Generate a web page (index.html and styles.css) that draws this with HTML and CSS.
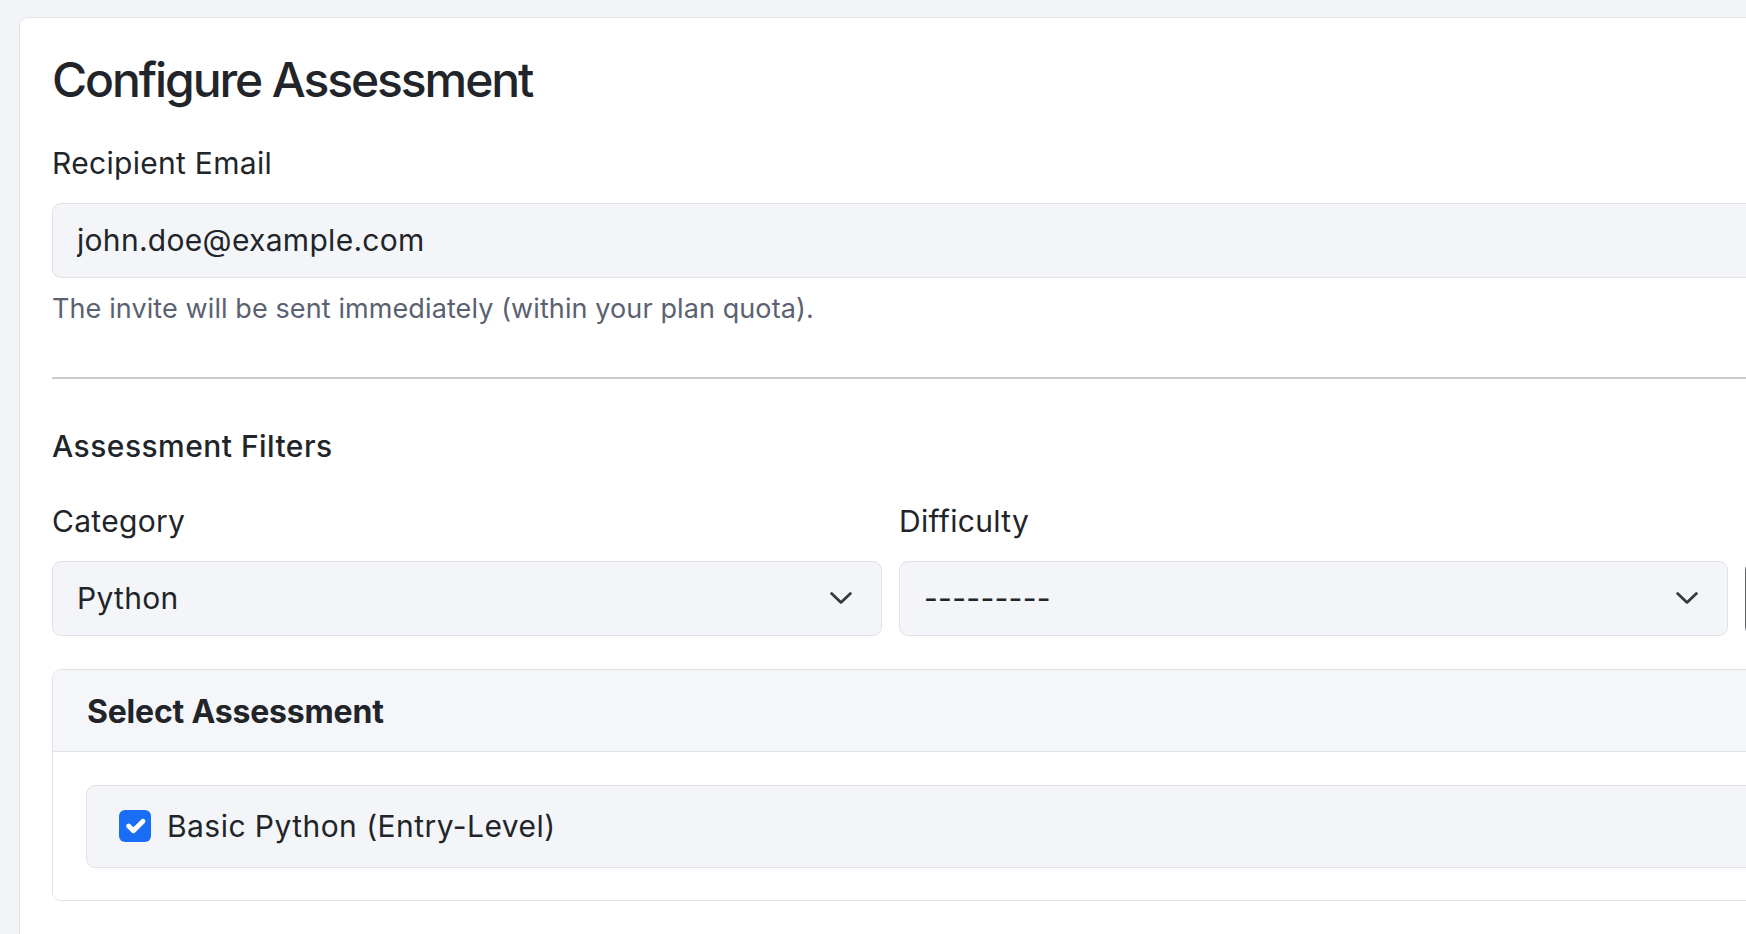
FILE: index.html
```html
<!DOCTYPE html>
<html lang="en">
<head>
<meta charset="utf-8">
<title>Configure Assessment</title>
<link rel="stylesheet" href="styles.css">
</head>
<body>
<div class="page">
  <main class="card">
    <h1 class="title">Configure Assessment</h1>
    <div class="field">
      <label class="label" for="email">Recipient Email</label>
      <input id="email" class="input" type="email" value="john.doe@example.com">
      <div class="help">The invite will be sent immediately (within your plan quota).</div>
    </div>
    <hr class="divider">
    <h2 class="section-title">Assessment Filters</h2>
    <div class="filters">
      <div class="filter">
        <div class="label">Category</div>
        <div class="select">
          <span>Python</span>
          <svg class="chevron" width="22" height="12" viewBox="0 0 22 12" aria-hidden="true"><path d="M1.6 1.6 L11 10.4 L20.4 1.6" fill="none" stroke="#343a40" stroke-width="2.8" stroke-linecap="round" stroke-linejoin="round"/></svg>
        </div>
      </div>
      <div class="filter">
        <div class="label">Difficulty</div>
        <div class="select">
          <span>---------</span>
          <svg class="chevron" width="22" height="12" viewBox="0 0 22 12" aria-hidden="true"><path d="M1.6 1.6 L11 10.4 L20.4 1.6" fill="none" stroke="#343a40" stroke-width="2.8" stroke-linecap="round" stroke-linejoin="round"/></svg>
        </div>
      </div>
      <div class="filter filter-action">
        <button class="btn" type="button" aria-label="Apply filters"></button>
      </div>
    </div>
    <section class="panel">
      <div class="panel-header">Select Assessment</div>
      <div class="panel-body">
        <label class="option">
          <span class="checkbox"><svg width="32" height="32" viewBox="0 0 20 20" aria-hidden="true"><path d="M6 10 L9 13 L15 7" fill="none" stroke="#fff" stroke-width="3" stroke-linecap="round" stroke-linejoin="round"/></svg></span>
          <span class="option-text">Basic Python (Entry-Level)</span>
        </label>
      </div>
    </section>
  </main>
</div>
</body>
</html>
```

FILE: styles.css
```css
html, body {
  margin: 0;
  padding: 0;
  overflow: hidden;
}

body {
  background: #f3f4f8;
  color: #212529;
  font-family: Inter, "Noto Sans", "Liberation Sans", sans-serif;
  letter-spacing: 0.3px;
}

.page {
  padding: 17px 0 0 19px;
}

.card {
  display: block;
  width: 2700px;
  background: #ffffff;
  border: 1px solid #e2e3e7;
  border-radius: 9px;
  padding: 33px 32px 90px 32px;
}

.title {
  margin: 0 0 32px 0;
  font-size: 48px;
  line-height: 1.2;
  font-weight: 500;
  letter-spacing: -2.1px;
}

.field {
  display: flex;
  flex-direction: column;
}

.label {
  display: block;
  font-size: 30px;
  line-height: 45px;
  font-weight: 400;
  margin-bottom: 17px;
}

.input {
  box-sizing: border-box;
  height: 75px;
  width: 100%;
  margin: 0;
  padding: 0 24px;
  border: 1px solid #dfe1e6;
  border-radius: 9px;
  background: #f4f5f9;
  color: #212529;
  font-family: inherit;
  font-size: 30px;
  letter-spacing: 0.3px;
  outline: none;
}

.help {
  margin-top: 11px;
  font-size: 27px;
  line-height: 40px;
  letter-spacing: 0.1px;
  color: #5a6271;
}

.divider {
  margin: 48px 0 0 0;
  border: 0;
  border-top: 2px solid #cacbcd;
}

.section-title {
  margin: 49px 0 35px 0;
  font-size: 30px;
  line-height: 36px;
  font-weight: 500;
  letter-spacing: 0.45px;
}

.filters {
  display: grid;
  grid-template-columns: 830px 829px 300px;
  column-gap: 17px;
}

.filter-action {
  display: flex;
  align-items: flex-end;
}

.select {
  box-sizing: border-box;
  height: 75px;
  display: flex;
  align-items: center;
  justify-content: space-between;
  padding: 0 29px 0 24px;
  border: 1px solid #dfe1e6;
  border-radius: 9px;
  background: #f4f5f9;
  font-size: 30px;
}

.btn {
  box-sizing: border-box;
  height: 75px;
  width: 100%;
  border: 1px solid #5c636a;
  border-radius: 9px;
  background: #ffffff;
  padding: 0 24px;
}

.panel {
  margin-top: 33px;
  border: 1px solid #e2e3e7;
  border-radius: 9px;
  overflow: hidden;
}

.panel-header {
  background: #f5f6f9;
  border-bottom: 1px solid #e2e3e7;
  padding: 19px 34px 17px 34px;
  font-size: 32px;
  line-height: 45px;
  font-weight: 700;
  letter-spacing: -0.2px;
}

.panel-body {
  padding: 33px 33px 32px 33px;
  background: #ffffff;
}

.option {
  display: flex;
  align-items: center;
  gap: 16px;
  padding: 18px 32px 18px 32px;
  border: 1px solid #e0e2e6;
  border-radius: 9px;
  background: #f4f5f8;
  font-size: 30px;
  line-height: 45px;
  letter-spacing: 0.45px;
}

.checkbox {
  display: flex;
  width: 32px;
  height: 32px;
  border-radius: 6px;
  background: #1a6ef6;
  flex: none;
}
```
